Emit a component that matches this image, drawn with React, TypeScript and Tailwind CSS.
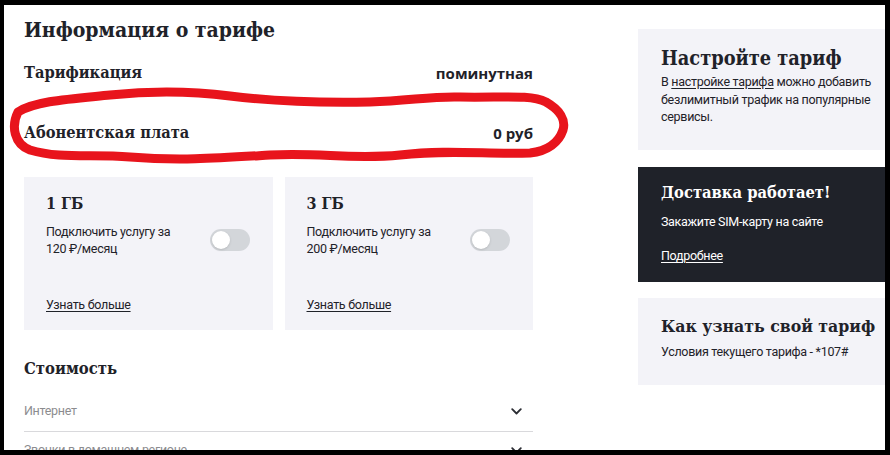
import React from "react";

const serif = { fontFamily: '"DejaVu Serif Condensed", "DejaVu Serif", "Liberation Serif", serif', fontStretch: "condensed" as const };

function Toggle() {
  return (
    <div className="w-[40px] h-[22px] rounded-full bg-[#d3d6da] flex items-center px-[2px] shrink-0">
      <div className="w-[18px] h-[18px] rounded-full bg-white shadow-sm" />
    </div>
  );
}

function Chevron() {
  return (
    <svg width="11" height="7" viewBox="0 0 11 7" className="shrink-0">
      <path d="M1.2 1.2 L5.5 5.5 L9.8 1.2" fill="none" stroke="#2b2d33" strokeWidth="1.8" strokeLinecap="round" strokeLinejoin="round" />
    </svg>
  );
}

function ServiceCard({ title, price }: { title: string; price: string }) {
  return (
    <div className="flex-1 h-[153px] bg-[#f3f3f8] pl-[22px] pr-[23px] pt-[15px]">
      <div className="text-[16px] leading-[24px] font-bold text-[#1f2229]" style={serif}>
        {title}
      </div>
      <div className="mt-[7px] flex items-center justify-between">
        <div className="text-[12.5px] leading-[17px] tracking-[-0.3px] text-[#1f2229]">
          Подключить услугу за
          <br />
          {price} ₽/месяц
        </div>
        <Toggle />
      </div>
      <div className="mt-[39px] text-[12.5px] leading-[17px] tracking-[-0.3px] text-[#1f2229] underline underline-offset-2">
        Узнать больше
      </div>
    </div>
  );
}

export default function App() {
  return (
    <div
      className="relative w-[890px] h-[455px] bg-black pt-[5px] pl-[4px] pr-[5px] pb-[5px]"
      style={{ fontFamily: 'Roboto, "Open Sans", sans-serif' }}
    >
      <div className="w-full h-full bg-white overflow-hidden flex">
        {/* left column */}
        <div className="ml-[20px] w-[509px] shrink-0 pt-[11px]">
          <div className="text-[21px] leading-[28px] font-bold text-[#1f2229]" style={serif}>
            Информация о тарифе
          </div>
          <div className="mt-[17px] h-6 flex items-center justify-between">
            <div className="text-[16.3px] font-bold text-[#1f2229]" style={serif}>
              Тарификация
            </div>
            <div className="text-[15px] font-bold text-[#1f2229]" style={{ fontFamily: '"Open Sans", sans-serif' }}>
              поминутная
            </div>
          </div>
          <div className="mt-[36px] h-6 flex items-center justify-between">
            <div className="text-[16.3px] font-bold text-[#1f2229]" style={serif}>
              Абонентская плата
            </div>
            <div className="text-[15px] font-bold text-[#1f2229]" style={{ fontFamily: '"Open Sans", sans-serif' }}>
              0 руб
            </div>
          </div>
          <div className="mt-[32px] flex gap-[12px]">
            <ServiceCard title="1 ГБ" price="120" />
            <ServiceCard title="3 ГБ" price="200" />
          </div>
          <div className="mt-[27px] text-[16.5px] leading-[24px] font-bold text-[#1f2229]" style={serif}>
            Стоимость
          </div>
          <div className="mt-[12px] pt-[8px] pb-[10px] border-b border-[#d9d9dc] flex items-center justify-between pr-[11px]">
            <span className="text-[12.5px] leading-[20px] tracking-[-0.3px] text-[#8c8c8f]">Интернет</span>
            <Chevron />
          </div>
          <div className="pt-[8px] pb-[10px] flex items-center justify-between pr-[11px]">
            <span className="text-[12.5px] leading-[20px] tracking-[-0.3px] text-[#8c8c8f]">Звонки в домашнем регионе</span>
            <Chevron />
          </div>
        </div>

        {/* right column */}
        <div className="ml-[105px] w-[262px] shrink-0 pt-[24px] flex flex-col">
          <div className="h-[121px] bg-[#f3f3f8] pl-[23px] pt-[15px]">
            <div className="text-[19.8px] leading-[28px] font-bold text-[#1f2229]" style={serif}>
              Настройте тариф
            </div>
            <div className="mt-[1px] text-[12.5px] leading-[17.5px] tracking-[-0.3px] text-[#1f2229]">
              В <span className="underline underline-offset-2">настройке тарифа</span> можно добавить
              <br />
              безлимитный трафик на популярные
              <br />
              сервисы.
            </div>
          </div>
          <div className="mt-[17px] h-[115px] bg-[#1f2229] pl-[23px] pt-[13px]">
            <div className="text-[16.4px] leading-[26px] font-bold text-white" style={serif}>
              Доставка работает!
            </div>
            <div className="mt-[7px] text-[12.5px] leading-[18px] tracking-[-0.3px] text-white">Закажите SIM-карту на сайте</div>
            <div className="mt-[16px] text-[12.5px] leading-[18px] tracking-[-0.3px] text-white underline underline-offset-2">
              Подробнее
            </div>
          </div>
          <div className="mt-[16px] h-[87px] bg-[#f3f3f8] pl-[23px] pt-[14px]">
            <div className="text-[17.5px] leading-[28px] font-bold text-[#1f2229] whitespace-nowrap" style={serif}>
              Как узнать свой тариф
            </div>
            <div className="mt-[3px] text-[12.5px] leading-[18px] tracking-[-0.3px] text-[#1f2229]">
              Условия текущего тарифа - *107#
            </div>
          </div>
        </div>
      </div>

      {/* hand-drawn red marker loop */}
      <svg className="absolute left-0 top-0 pointer-events-none" width="890" height="455" viewBox="0 0 890 455">
        <path
          d="M 18 112 C 35 101, 70 99, 110 95 C 150 91, 190 91, 230 96 C 270 101, 320 103, 370 102 C 410 101, 430 96, 460 97 C 500 98, 530 94, 546 102 C 560 110, 566 120, 563 130 C 559 142, 548 151, 530 153 C 490 155, 450 149, 400 155 C 350 160, 320 152, 270 155 C 220 158, 180 161, 130 157 C 90 154, 60 159, 30 150 C 14 144, 11 126, 18 112 Z"
          fill="none"
          stroke="#e8141c"
          strokeWidth="9"
          strokeLinejoin="round"
          strokeLinecap="round"
        />
      </svg>
    </div>
  );
}
